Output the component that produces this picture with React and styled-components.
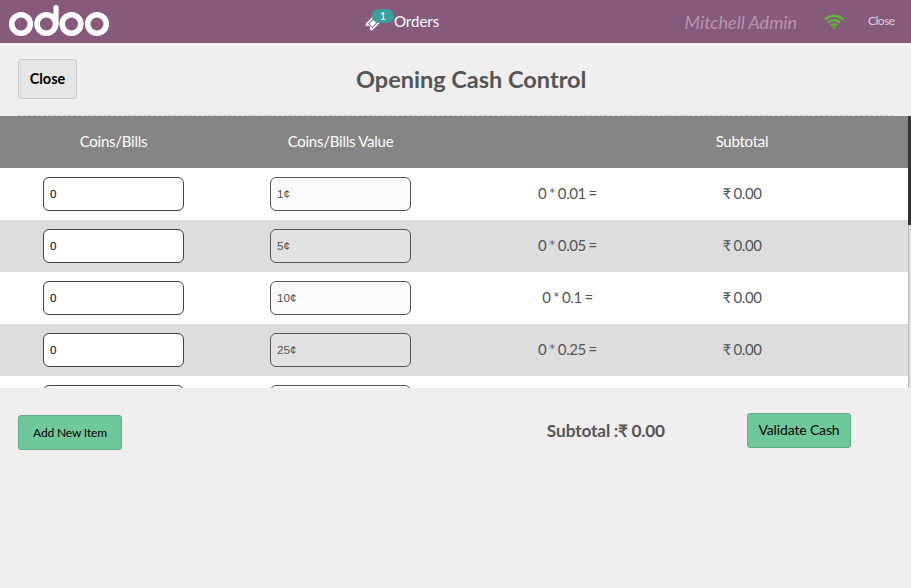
import React from "react";
import styled, { createGlobalStyle } from "styled-components";

const GlobalStyle = createGlobalStyle`
  * { box-sizing: border-box; }
  html, body { margin: 0; height: 100%; }
  body { background: #f0eeee; color: #555; font-family: Lato, sans-serif; font-size: 16px; overflow: hidden; }
`;

const Page = styled.div`
  display: flex;
  flex-direction: column;
  width: 911px;
  height: 588px;
`;

const TopBar = styled.header`
  display: flex;
  height: 43px;
  background: #875a7b;
  color: #fff;
`;

const Logo = styled.svg`
  width: 102px;
  height: 34px;
  margin: 4px 0 0 8px;
  flex: none;
`;

const Orders = styled.div`
  display: flex;
  align-items: center;
  margin-left: 254px;
  width: 80px;
  font-size: 15px;
  line-height: 43px;
`;

const TicketWrap = styled.span`
  position: relative;
  width: 30px;
  height: 43px;
  flex: none;
`;

const TicketIcon = styled.svg`
  display: block;
  width: 17px;
  height: 17px;
  margin: 14px 0 0 1px;
`;

const Badge = styled.span`
  position: absolute;
  left: 8px;
  top: 9px;
  width: 22px;
  height: 14px;
  border-radius: 7px;
  background: #3a9f9d;
  font-size: 11px;
  line-height: 14px;
  text-align: center;
`;

const User = styled.div`
  margin-left: auto;
  color: #b994ae;
  font-size: 18px;
  font-style: italic;
  line-height: 45px;
`;

const WifiIcon = styled.svg`
  width: 20px;
  height: 16px;
  margin: 14px 24px 0 27px;
`;

const CloseLink = styled.div`
  width: 43px;
  color: #ddd0d9;
  font-size: 12px;
  letter-spacing: -0.5px;
  line-height: 42px;
`;

const TitleBar = styled.section`
  display: flex;
  height: 73px;
  margin: 0 18px;
  padding-top: 16px;
  border-bottom: 1px dashed #ccc;
`;

const CloseButton = styled.button`
  width: 59px;
  height: 40px;
  padding: 0 0 1px;
  border: 1px solid #cacaca;
  border-radius: 3px;
  background: #e6e6e6;
  color: #000;
  font: bold 14.5px Lato, sans-serif;
`;

const Title = styled.h1`
  margin: 0 0 0 279px;
  font-size: 23.5px;
  font-weight: bold;
  line-height: 41px;
  white-space: nowrap;
`;

const Scroller = styled.section`
  display: flex;
  height: 272px;
  overflow: hidden;
`;

const Table = styled.div`
  width: 908px;
`;

const Row = styled.div`
  display: grid;
  grid-template-columns: 227px 227px 227px 122px;
  align-items: center;
  justify-items: center;
  height: 52px;
  background: ${(p) => (p.$striped ? "#ddd" : "#fff")};
`;

const Cell = styled.span`
  padding-bottom: 2px;
  font-size: 15px;
  letter-spacing: -0.4px;
  word-spacing: -0.7px;
  white-space: nowrap;
`;

const HeadRow = styled(Row)`
  background: #858585;
  color: #fff;

  ${Cell} {
    letter-spacing: -0.25px;
    word-spacing: 0;
  }
`;

const Field = styled.input`
  width: 141px;
  height: 34px;
  padding: 0 6px 2px;
  border: 1px solid #444;
  border-radius: 6px;
  background: #fff;
  color: #000;
  font: 11.7px "Liberation Sans", Arial, sans-serif;

  &:disabled {
    border-color: #555;
    background: rgba(239, 239, 239, 0.3);
    color: #545454;
  }
`;

const ScrollTrack = styled.div`
  width: 3px;
  height: 272px;
  border-left: 1px solid #bbb;
  background: #ddd;
`;

const ScrollThumb = styled.div`
  width: 3px;
  height: 109px;
  margin-left: -1px;
  background: #333;
`;

const Footer = styled.footer`
  display: flex;
  align-items: flex-start;
  padding: 25px 60px 0 18px;
`;

const ActionButton = styled.button`
  width: 104px;
  height: 35px;
  margin-top: ${(p) => (p.$small ? 2 : 0)}px;
  padding: 0 0 ${(p) => (p.$small ? 0 : 2)}px;
  border: 1px solid #5fae87;
  border-radius: 3px;
  background: #6ec89b;
  color: #000;
  font: ${(p) => (p.$small ? 12 : 14)}px Lato, sans-serif;
  letter-spacing: -0.15px;
`;

const Total = styled.div`
  margin: 0 82px 0 auto;
  font-size: 17.2px;
  font-weight: bold;
  line-height: 35px;
  letter-spacing: -0.1px;
  word-spacing: -0.5px;
`;

const ROWS = [
  ["1¢", "0.01"],
  ["5¢", "0.05"],
  ["10¢", "0.1"],
  ["25¢", "0.25"],
];

export default function App() {
  return (
    <Page>
      <GlobalStyle />
      <TopBar>
        <Logo viewBox="0 0 102 34" fill="none" stroke="#fff" strokeWidth="5.6">
          <circle cx="13" cy="20" r="9.3" />
          <circle cx="38.3" cy="20" r="9.3" />
          <circle cx="63.5" cy="20" r="9.3" />
          <circle cx="89" cy="20" r="9.3" />
          <path d="M48 20V3.7" strokeWidth="5.2" strokeLinecap="round" />
        </Logo>
        <Orders>
          <TicketWrap>
            <TicketIcon viewBox="0 0 1792 1792" fill="#fff">
              <path d="M1024 452l316 316-572 572-316-316zM813 1419l618-618q19-19 19-45t-19-45l-362-362q-18-18-45-18t-45 18l-618 618q-19 19-19 45t19 45l362 362q18 18 45 18t45-18zM1702 794l-907 908q-37 37-90.5 37t-90.5-37l-126-126q56-56 56-136t-56-136-136-56-136 56l-125-126q-37-37-37-90.5t37-90.5l907-906q37-37 90.5-37t90.5 37l125 125q-56 56-56 136t56 136 136 56 136-56l126 125q37 37 37 90.5t-37 90.5z" />
            </TicketIcon>
            <Badge>1</Badge>
          </TicketWrap>
          Orders
        </Orders>
        <User>Mitchell Admin</User>
        <WifiIcon viewBox="0 0 20 16" fill="none" stroke="#5bb832" strokeWidth="2.5">
          <path d="M1 5.500C6 .4 14 .4 19 5.500M3.900 8.700c3.500-3.300 8.700-3.300 12.200 0M6.700 11.800c1.900-1.700 4.700-1.700 6.600 0" />
          <path d="M8 13.200Q10 11.900 12 13.200L10 15.400z" fill="#5bb832" stroke="none" />
        </WifiIcon>
        <CloseLink>Close</CloseLink>
      </TopBar>
      <TitleBar>
        <CloseButton>Close</CloseButton>
        <Title>Opening Cash Control</Title>
      </TitleBar>
      <Scroller>
        <Table>
          <HeadRow>
            <Cell>Coins/Bills</Cell>
            <Cell>Coins/Bills Value</Cell>
            <Cell />
            <Cell>Subtotal</Cell>
          </HeadRow>
          {ROWS.map(([name, value], i) => (
            <Row key={name} $striped={i % 2 === 1}>
              <Field defaultValue="0" />
              <Field defaultValue={name} disabled />
              <Cell>0 * {value} =</Cell>
              <Cell>₹ 0.00</Cell>
            </Row>
          ))}
          <Row>
            <Field />
            <Field disabled />
          </Row>
        </Table>
        <ScrollTrack>
          <ScrollThumb />
        </ScrollTrack>
      </Scroller>
      <Footer>
        <ActionButton $small>Add New Item</ActionButton>
        <Total>Subtotal :₹ 0.00</Total>
        <ActionButton>Validate Cash</ActionButton>
      </Footer>
    </Page>
  );
}
